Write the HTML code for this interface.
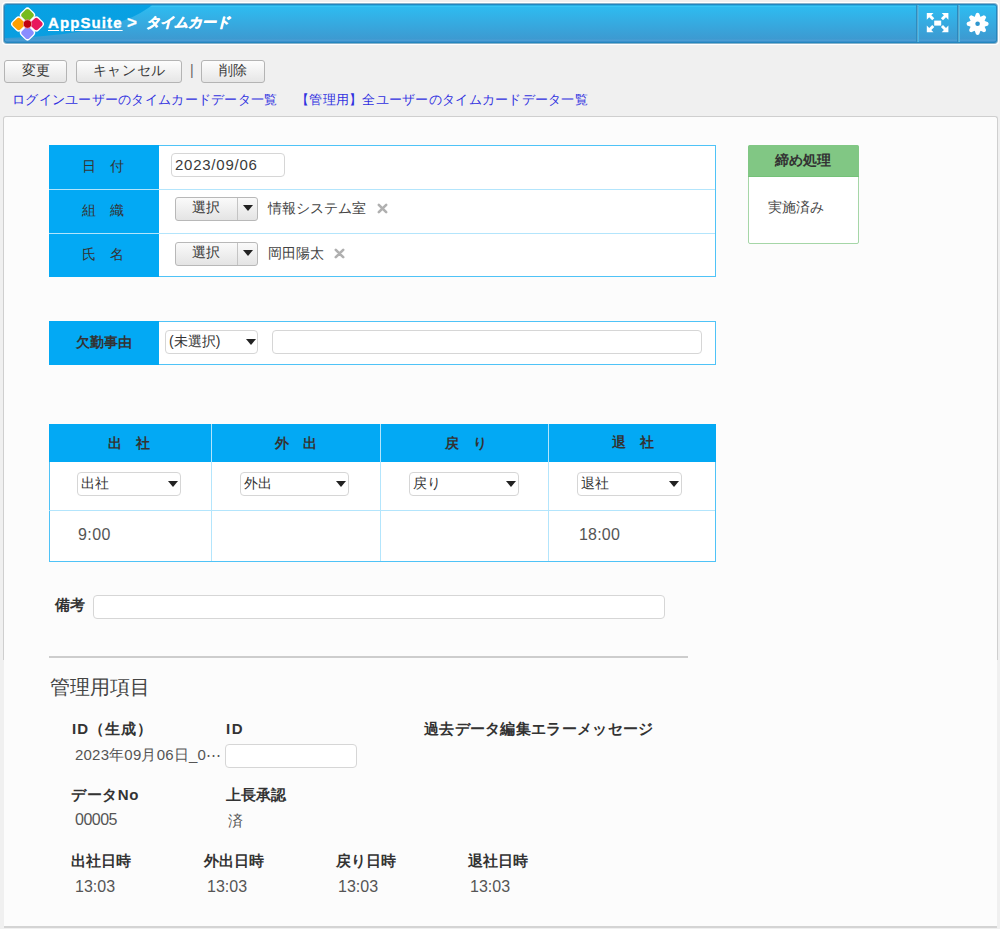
<!DOCTYPE html>
<html><head><meta charset="utf-8">
<style>
*{box-sizing:border-box}
html,body{margin:0;padding:0}
body{width:1000px;height:929px;background:#f0f0f0;position:relative;overflow:hidden;font-family:"Liberation Sans",sans-serif;color:#333;font-size:14px}
.a{position:absolute;white-space:nowrap}
.hdr{left:2px;top:2px;width:997px;height:43px;background:#fff;border-radius:4px}
.hdr-b{position:absolute;left:1px;top:1px;width:995px;height:41px;background:#8ab3cb;border-radius:4px}
.hdr-c{position:absolute;left:1px;top:1px;width:993px;height:39px;background:#2386bf;border-radius:3px}
.hdr-in{position:absolute;left:1px;top:1px;width:991px;height:37px;border-radius:2px;background:linear-gradient(#2aaee2 0 1px,#38c4f4 1px 2px,#2ebbf0 2px,#3d9ad1 34px,#4a9dd4 35px 36px,#3a90cc 36px);overflow:hidden}
.btn{position:absolute;height:23px;border:1px solid #b4b4b4;border-radius:3px;background:linear-gradient(#fdfdfd,#e6e6e6);text-align:center;line-height:18px;font-size:14px;color:#383838}
.lnk{color:#3030e0;font-size:13.3px;letter-spacing:0.27px}
.cont{left:3px;top:116px;width:995px;height:544px;border:1px solid #cfcfcf;border-bottom:none;border-radius:3px 3px 0 0;background:#fcfcfc}
.cont2{left:4px;top:659px;width:993px;height:269px;background:#fcfcfc;border-bottom:2px solid #d4d4d4}
.lbl{position:absolute;background:#03a9f4;color:#333;text-align:center;font-size:14px}
.tbl{position:absolute;background:#fff;border:1px solid #4fc3f7}
.sep{position:absolute;height:1px;background:#b3e5fc}
.vsep{position:absolute;width:1px;background:#b3e5fc}
.inp{position:absolute;background:#fff;border:1px solid #d6d6d6;border-radius:4px}
.sel{position:absolute;background:#fff;border:1px solid #d6d6d6;border-radius:4px;font-size:14px;color:#333;line-height:21px;padding-left:3px}
.tri{position:absolute;width:0;height:0;border-left:5px solid transparent;border-right:5px solid transparent;border-top:6px solid #222}
.sbtn{position:absolute;height:24px;border:1px solid #b8b8b8;border-radius:3px;background:linear-gradient(#fafafa,#e4e4e4)}
.b{font-weight:bold}
.gloss{position:absolute;left:-165px;top:-63px;width:320px;height:96px;border-radius:50%;background:linear-gradient(#00a8ea,#0a9ee0)}
.t{position:absolute;white-space:nowrap;line-height:1}
</style></head><body>

<!-- header -->
<div class="a hdr"><div class="hdr-b"><div class="hdr-c"><div class="hdr-in">
<div class="gloss"></div>
<div class="a" style="left:911px;top:0;width:1px;height:40px;background:#2c8cc0"></div>
<div class="a" style="left:912px;top:0;width:1px;height:40px;background:#5aa8cc"></div>
<div class="a" style="left:913px;top:0;width:1px;height:40px;background:#48b8ea"></div>
<div class="a" style="left:952px;top:0;width:1px;height:40px;background:#2c88bc"></div>
<div class="a" style="left:953px;top:0;width:1px;height:40px;background:#5aa8cc"></div>
<div class="a" style="left:954px;top:0;width:1px;height:40px;background:#50bce6"></div>
</div></div></div></div>
<svg class="a" style="left:0;top:0" width="60" height="50" viewBox="0 0 60 50">
<g transform="translate(27.5,24)">
<g stroke="#fff" stroke-width="1.3">
<rect x="-5.8" y="-5.8" width="11.6" height="11.6" rx="3" fill="#77bb1e" transform="translate(0,-8.8) rotate(45)"/>
<rect x="-5.8" y="-5.8" width="11.6" height="11.6" rx="3" fill="#ff9f00" transform="translate(-8.8,0) rotate(45)"/>
<rect x="-5.8" y="-5.8" width="11.6" height="11.6" rx="3" fill="#e8175d" transform="translate(8.8,0) rotate(45)"/>
<rect x="-5.8" y="-5.8" width="11.6" height="11.6" rx="3" fill="#8a8cff" transform="translate(0,8.8) rotate(45)"/>
</g>
<circle r="4.2" fill="#c00010" stroke="#f0a0a8" stroke-width="0.8"/>
</g></svg>
<div class="t b" style="left:48px;top:15px;font-size:15px;color:#fff;letter-spacing:1.1px;text-decoration:underline;text-underline-offset:2px;-webkit-text-stroke:0.35px #fff">AppSuite</div>
<div class="t b" style="left:127px;top:14px;font-size:17px;color:#fff;-webkit-text-stroke:0.3px #fff">&gt;</div>
<div class="t b" style="left:146px;top:15px;font-size:14px;color:#fff;font-style:italic;-webkit-text-stroke:0.45px #fff">タイムカード</div>
<svg class="a" style="left:924px;top:10px" width="28" height="26" viewBox="0 0 28 26">
<g fill="#fff">
<rect x="10.2" y="10.6" width="7" height="5"/>
<path d="M2.8 3 L9.5 3 L7.3 5.2 L10.3 8.2 L8.2 10.3 L5.2 7.3 L2.8 9.7 Z"/>
<path d="M24.4 3 L17.7 3 L19.9 5.2 L16.9 8.2 L19 10.3 L22 7.3 L24.4 9.7 Z"/>
<path d="M2.8 22.2 L9.5 22.2 L7.3 20 L10.3 17 L8.2 14.9 L5.2 17.9 L2.8 15.5 Z"/>
<path d="M24.4 22.2 L17.7 22.2 L19.9 20 L16.9 17 L19 14.9 L22 17.9 L24.4 15.5 Z"/>
</g></svg>
<svg class="a" style="left:964px;top:10px" width="28" height="28" viewBox="0 0 28 28">
<g transform="translate(13.6,13.8)" fill="#fff">
<circle r="7.4"/>
<g id="tooth"><path d="M-3.2 -6 L-1.6 -10.4 Q0 -11.8 1.6 -10.4 L3.2 -6 Z"/></g>
<use href="#tooth" transform="rotate(45)"/><use href="#tooth" transform="rotate(90)"/><use href="#tooth" transform="rotate(135)"/>
<use href="#tooth" transform="rotate(180)"/><use href="#tooth" transform="rotate(225)"/><use href="#tooth" transform="rotate(270)"/><use href="#tooth" transform="rotate(315)"/>
<circle r="2.3" fill="#2e96ce"/>
</g></svg>

<!-- buttons -->
<div class="btn" style="left:4px;top:60px;width:63px">変更</div>
<div class="btn" style="left:76px;top:60px;width:106px;letter-spacing:0.7px;text-indent:0.7px">キャンセル</div>
<div class="a" style="left:190px;top:62px;font-size:14px;color:#666">|</div>
<div class="btn" style="left:201px;top:60px;width:64px">削除</div>

<div class="a lnk" style="left:12px;top:91px">ログインユーザーのタイムカードデータ一覧</div>
<div class="a lnk" style="left:296px;top:91px">【管理用】全ユーザーのタイムカードデータ一覧</div>

<div class="a cont"></div>
<div class="a cont2"></div>

<!-- table 1 -->
<div class="tbl" style="left:49px;top:145px;width:667px;height:132px"></div>
<div class="lbl" style="left:49px;top:145px;width:110px;height:132px"></div>
<div class="sep" style="left:49px;top:189px;width:666px"></div>
<div class="sep" style="left:49px;top:233px;width:666px"></div>
<div class="t" style="left:82px;top:159px"><span style="word-spacing:10px">日 付</span></div>
<div class="t" style="left:82px;top:203px"><span style="word-spacing:10px">組 織</span></div>
<div class="t" style="left:82px;top:247px"><span style="word-spacing:10px">氏 名</span></div>

<div class="inp" style="left:171px;top:153px;width:114px;height:24px"></div>
<div class="t" style="left:175px;top:157px;font-size:15px;letter-spacing:0.75px;color:#3a3a3a">2023/09/06</div>

<div class="sbtn" style="left:175px;top:197px;width:83px"></div>
<div class="a" style="left:237px;top:198px;width:1px;height:22px;background:#c4c4c4"></div>
<div class="t" style="left:192px;top:200px">選択</div>
<div class="tri" style="left:243px;top:205px"></div>
<div class="t" style="left:268px;top:201px;color:#444">情報システム室</div>
<svg class="a" style="left:376px;top:202px" width="13" height="13" viewBox="0 0 13 13"><path d="M2.8 2.8 L10.2 10.2 M10.2 2.8 L2.8 10.2" stroke="#b0b0b0" stroke-width="2.6" stroke-linecap="round"/></svg>

<div class="sbtn" style="left:175px;top:242px;width:83px"></div>
<div class="a" style="left:237px;top:243px;width:1px;height:22px;background:#c4c4c4"></div>
<div class="t" style="left:192px;top:245px">選択</div>
<div class="tri" style="left:243px;top:250px"></div>
<div class="t" style="left:268px;top:246px;color:#444">岡田陽太</div>
<svg class="a" style="left:333px;top:247px" width="13" height="13" viewBox="0 0 13 13"><path d="M2.8 2.8 L10.2 10.2 M10.2 2.8 L2.8 10.2" stroke="#b0b0b0" stroke-width="2.6" stroke-linecap="round"/></svg>

<!-- shime box -->
<div class="a" style="left:748px;top:145px;width:111px;height:99px;border:1px solid #a5d6a7;background:#fff;border-radius:2px"></div>
<div class="a" style="left:748px;top:145px;width:111px;height:32px;background:#81c784;border-bottom:1px solid #74c178;border-radius:2px 2px 0 0"></div>
<div class="t b" style="left:775px;top:153px">締め処理</div>
<div class="t" style="left:768px;top:200px;color:#444">実施済み</div>

<!-- table 2 -->
<div class="tbl" style="left:49px;top:321px;width:667px;height:44px"></div>
<div class="lbl" style="left:49px;top:321px;width:110px;height:44px"></div>
<div class="t b" style="left:76px;top:335px">欠勤事由</div>
<div class="sel" style="left:165px;top:330px;width:93px;height:24px">(未選択)</div>
<div class="tri" style="left:246px;top:339px"></div>
<div class="inp" style="left:272px;top:330px;width:430px;height:24px"></div>

<!-- table 3 -->
<div class="tbl" style="left:49px;top:424px;width:667px;height:138px"></div>
<div class="lbl" style="left:49px;top:424px;width:667px;height:38px"></div>
<div class="vsep" style="left:211px;top:424px;height:137px"></div>
<div class="vsep" style="left:380px;top:424px;height:137px"></div>
<div class="vsep" style="left:548px;top:424px;height:137px"></div>
<div class="sep" style="left:49px;top:510px;width:666px"></div>
<div class="t b" style="left:108px;top:436px"><span style="word-spacing:10px">出 社</span></div>
<div class="t b" style="left:275px;top:436px"><span style="word-spacing:10px">外 出</span></div>
<div class="t b" style="left:445px;top:436px"><span style="word-spacing:10px">戻 り</span></div>
<div class="t b" style="left:612px;top:435px"><span style="word-spacing:10px">退 社</span></div>

<div class="sel" style="left:77px;top:472px;width:104px;height:24px">出社</div>
<div class="tri" style="left:168px;top:481px"></div>
<div class="sel" style="left:240px;top:472px;width:109px;height:24px">外出</div>
<div class="tri" style="left:336px;top:481px"></div>
<div class="sel" style="left:409px;top:472px;width:110px;height:24px">戻り</div>
<div class="tri" style="left:506px;top:481px"></div>
<div class="sel" style="left:577px;top:472px;width:105px;height:24px">退社</div>
<div class="tri" style="left:669px;top:481px"></div>

<div class="t" style="left:78px;top:527px;font-size:16px;letter-spacing:0.4px;color:#555">9:00</div>
<div class="t" style="left:579px;top:527px;font-size:16px;letter-spacing:0.2px;color:#555">18:00</div>

<!-- biko -->
<div class="t b" style="left:55px;top:597px;font-size:15px">備考</div>
<div class="inp" style="left:93px;top:595px;width:572px;height:24px"></div>

<div class="a" style="left:49px;top:656px;width:639px;height:2px;background:#cdcdcd"></div>

<!-- admin -->
<div class="t" style="left:50px;top:678px;font-size:19.5px;color:#444">管理用項目</div>

<div class="t b" style="left:72px;top:721px;font-size:15px;letter-spacing:1px">ID（生成）</div>
<div class="t b" style="left:226px;top:721px;font-size:15px;letter-spacing:1.5px">ID</div>
<div class="t b" style="left:424px;top:721px;font-size:15px;letter-spacing:0.3px">過去データ編集エラーメッセージ</div>
<div class="t" style="left:75px;top:747px;font-size:15px;letter-spacing:0.2px;color:#555">2023年09月06日_0⋯</div>
<div class="inp" style="left:225px;top:744px;width:132px;height:24px"></div>

<div class="t b" style="left:71px;top:787px;font-size:15px;letter-spacing:0.6px">データNo</div>
<div class="t b" style="left:226px;top:787px;font-size:15px">上長承認</div>
<div class="t" style="left:75px;top:812px;font-size:16px;letter-spacing:-0.5px;color:#555">00005</div>
<div class="t" style="left:228px;top:813px;font-size:15px;color:#555">済</div>

<div class="t b" style="left:71px;top:853px;font-size:15px">出社日時</div>
<div class="t b" style="left:204px;top:853px;font-size:15px">外出日時</div>
<div class="t b" style="left:336px;top:853px;font-size:15px">戻り日時</div>
<div class="t b" style="left:468px;top:853px;font-size:15px">退社日時</div>
<div class="t" style="left:75px;top:879px;font-size:16px;color:#555">13:03</div>
<div class="t" style="left:207px;top:879px;font-size:16px;color:#555">13:03</div>
<div class="t" style="left:338px;top:879px;font-size:16px;color:#555">13:03</div>
<div class="t" style="left:470px;top:879px;font-size:16px;color:#555">13:03</div>

</body></html>
